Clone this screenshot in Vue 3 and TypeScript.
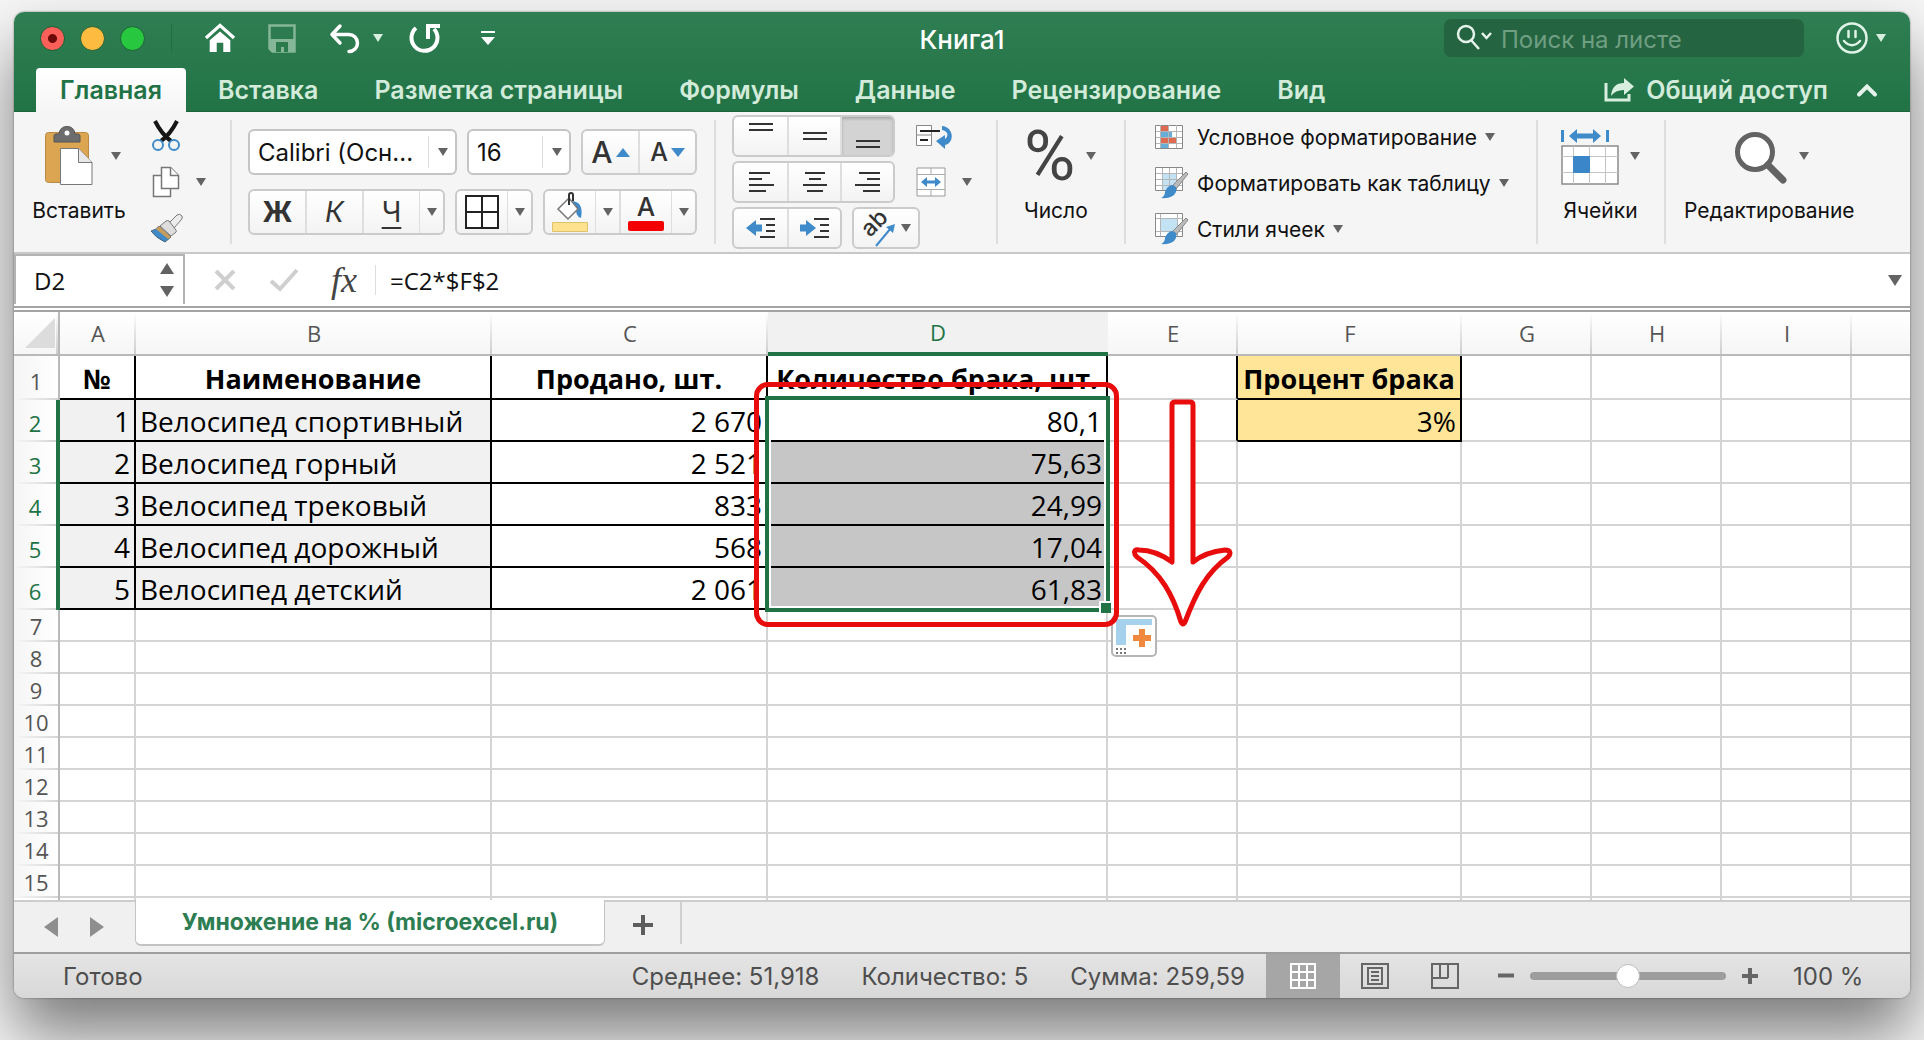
<script setup lang="ts">
import { ref } from 'vue'

const ribbonTabs: string[] = ['Главная', 'Вставка', 'Разметка страницы', 'Формулы', 'Данные', 'Рецензирование', 'Вид']
const activeTab = ref('Главная')
const columns: string[] = ['A', 'B', 'C', 'D', 'E', 'F', 'G', 'H', 'I', '']
const zoomLevel = ref(50)
const formula = ref('=C2*$F$2')
const cellName = ref('D2')

const values: Record<number, string[]> = {
  1: ['№', 'Наименование', 'Продано, шт.', 'Количество брака, шт.', '', 'Процент брака'],
  2: ['1', 'Велосипед спортивный', '2 670', '80,1', '', '3%'],
  3: ['2', 'Велосипед горный', '2 521', '75,63'],
  4: ['3', 'Велосипед трековый', '833', '24,99'],
  5: ['4', 'Велосипед дорожный', '568', '17,04'],
  6: ['5', 'Велосипед детский', '2 061', '61,83'],
}
const rowNumbers: number[] = Array.from({ length: 15 }, (_, i) => i + 1)

function cellText(row: number, col: number): string {
  return values[row]?.[col] ?? ''
}

function cellClass(row: number, col: number) {
  const inTable = row <= 6 && col <= 3
  const inPercent = row <= 2 && col === 5
  return {
    'line-right': inTable || inPercent || (row <= 2 && col === 4),
    'line-bottom': inTable || inPercent,
    head: row === 1,
    name: col === 1 && row > 1,
    muted: col <= 1 && row >= 2 && row <= 6,
    picked: col === 3 && row >= 3 && row <= 6,
    yellow: inPercent,
  }
}
</script>

<template>
  <div class="desk">
    <main class="window">
      <header class="top">
        <div class="titlebar">
          <div class="quick">
            <button class="light red" aria-label="Закрыть"></button>
            <button class="light amber" aria-label="Свернуть"></button>
            <button class="light green" aria-label="Развернуть"></button>
            <span class="quick-sep"></span>
            <button class="plain home" aria-label="Домой">
              <svg width="32" height="30" viewBox="0 0 34 32"><path d="M2 16 17 2.500 32 16" fill="none" stroke="#fff" stroke-width="3.500" /><path d="M6 18.500 17 9l11 9.500V31h-7.500V21h-7v10H6z" fill="#fff" /></svg>
            </button>
            <button class="plain save" aria-label="Сохранить">
              <svg width="28" height="29" viewBox="0 0 28 29"><path d="M1.500 1.500h25v26h-22l-3-3z" fill="none" stroke="#86b698" stroke-width="2.500" /><path d="M2 15h24v12H4l-2-2z" fill="#86b698" /><path d="M8 18h12v10h-4v-5h-3v5H8z" fill="#2b7a4c" /></svg>
            </button>
            <button class="plain undo" aria-label="Отменить">
              <svg width="32" height="31" viewBox="0 0 32 31" fill="none" stroke="#fff" stroke-width="3.500" stroke-linecap="round" stroke-linejoin="round"><path d="M11 3 3 11.500l8 8.500M4 11.500h16a8.500 8.500 0 0 1 0 17" /></svg>
              <i class="tri pale"></i>
            </button>
            <button class="plain redo" aria-label="Повторить">
              <svg width="32" height="32" viewBox="0 0 32 32" fill="none" stroke="#fff" stroke-width="4"><path d="M7 6a13 13 0 1 0 18 1" /><path d="M19 17V4h12" /></svg>
            </button>
            <button class="plain" aria-label="Настроить панель">
              <svg width="16" height="16" viewBox="0 0 16 16"><path d="M1 1h14v2H1zM1 7h14l-7 8z" fill="#fff" /></svg>
            </button>
          </div>
          <h1>Книга1</h1>
          <div class="tools">
            <label class="search">
              <svg width="36" height="30" viewBox="0 0 36 30" fill="none" stroke="#e6f3ea" stroke-width="2.500"><circle cx="10" cy="11" r="8" /><path d="m15 17 8 9M26 10l4.500 5 4.500-5" /></svg>
              <input type="text" placeholder="Поиск на листе" aria-label="Поиск на листе" />
            </label>
            <button class="plain smile" aria-label="Отзыв">
              <svg width="32" height="32" viewBox="0 0 32 32" fill="none" stroke="#dff3e6" stroke-width="2.500"><circle cx="16" cy="16" r="14.500" /><path d="M12.500 9v6M19.500 9v6M8 19q8 8.500 16 0" stroke-linecap="round" /></svg>
              <i class="tri pale"></i>
            </button>
          </div>
        </div>
        <nav class="tabs">
          <button v-for="t in ribbonTabs" :key="t" class="tab" :class="{ active: t === activeTab }" @click="activeTab = t">{{ t }}</button>
          <button class="share">
            <svg width="30" height="24" viewBox="0 0 30 24"><path d="M2 5v17h23v-6" fill="none" stroke="#d8efdf" stroke-width="3" /><path d="M7 18q1-13 13-13V0l10 8.500-10 8.500v-5Q11 12 7 18z" fill="#d8efdf" /></svg>
            <span>Общий доступ</span>
          </button>
          <button class="plain collapse" aria-label="Свернуть ленту">
            <svg width="22" height="14" viewBox="0 0 22 14"><path d="m3 11.500 8-8 8 8" fill="none" stroke="#e6f3ea" stroke-width="4" stroke-linecap="round" /></svg>
          </button>
        </nav>
      </header>

      <section class="ribbon">
        <div class="group g-clip">
          <button class="big paste">
            <span class="pic">
              <svg width="48" height="60" viewBox="0 0 48 60"><rect x=".500" y="6.500" width="43" height="50" rx="3" fill="#dca552" stroke="#b98a45" /><path d="M9 16V10q0-2 2-2h3q1-7.500 8-7.500T30 8h3q2 0 2 2v6z" fill="#6d6d6d" stroke="#555" /><circle cx="22" cy="7" r="2.500" fill="#fff" /><path d="M15.500 22.500h18l13.500 14v22H15.500z" fill="#fff" stroke="#777" /><path d="M33.500 22.500v14H47" fill="#e8e8e8" stroke="#777" /></svg>
              <i class="tri"></i>
            </span>
            <span>Вставить</span>
          </button>
          <div class="clip-col">
            <button class="plain" aria-label="Вырезать">
              <svg width="32" height="32" viewBox="0 0 32 32"><path d="M5 1c4 8 9 15 16 20M27 1c-4 8-9 15-16 20" fill="none" stroke="#161616" stroke-width="4" /><circle cx="8" cy="25" r="5" fill="none" stroke="#3f8ac9" stroke-width="2" /><circle cx="24" cy="25" r="5" fill="none" stroke="#3f8ac9" stroke-width="2" /></svg>
            </button>
            <button class="plain copy" aria-label="Копировать">
              <svg width="32" height="32" viewBox="0 0 32 32" fill="#fff" stroke="#777" stroke-width="1.500"><path d="M3.500 9.500h17v21h-17z" /><path d="M11.500 1.500h9l8 8v13h-17z" /><path d="M20.500 1.500v8h8" /></svg>
              <i class="tri"></i>
            </button>
            <button class="plain" aria-label="Формат по образцу">
              <svg width="34" height="32" viewBox="0 0 34 32"><path d="M18 12 27 3q3-2 5 1 1 2-1 4l-7 8z" fill="#ececec" stroke="#777" /><path d="m10 14 6-5q2-1 3 0l7 9q1 2-1 3l-4 3z" fill="#ddd" stroke="#777" /><path d="M9 14 21 25l-6 5Q6 26 1 19q5-1 8-5z" fill="#3f8ac9" stroke="#46627c" /><path d="M9 14 21 25l-3 2L6 17z" fill="#c89c5b" /></svg>
            </button>
          </div>
        </div>

        <div class="group g-font">
          <div class="line">
            <span class="select wide"><select aria-label="Шрифт"><option>Calibri (Осн...</option></select><i class="tri"></i></span>
            <span class="select size"><select aria-label="Размер шрифта"><option>16</option></select><i class="tri"></i></span>
            <div class="seg grow">
              <button aria-label="Увеличить размер"><span class="glyph-a">A</span><svg width="14" height="9" viewBox="0 0 14 9"><path d="M0 9 7 0l7 9z" fill="#3f8ac9" /></svg></button>
              <button aria-label="Уменьшить размер"><span class="glyph-a small">A</span><svg width="14" height="9" viewBox="0 0 14 9"><path d="m0 0 7 9 7-9z" fill="#3f8ac9" /></svg></button>
            </div>
          </div>
          <div class="line">
            <div class="seg bui">
              <button class="b">Ж</button><button class="i">К</button><button class="u"><u>Ч</u></button><button class="drop" aria-label="Вид подчёркивания"><i class="tri"></i></button>
            </div>
            <div class="seg frame">
              <button aria-label="Границы"><svg width="34" height="34" viewBox="0 0 34 34"><path d="M1 1h32v32H1zM17 1v32M1 17h32" fill="#fff" stroke="#222" stroke-width="2" /></svg></button><button class="drop" aria-label="Вид границ"><i class="tri"></i></button>
            </div>
            <div class="seg paint">
              <button aria-label="Цвет заливки">
                <svg width="38" height="40" viewBox="0 0 38 40"><path d="M21 9q12 1 9 17-5-1-5-9z" fill="#3f8ac9" /><path d="M7 17 18 6l9 11-10 10z" fill="#fff" stroke="#777" stroke-width="1.500" /><path d="M18 13V3q0-2 2-2t2 2v6" fill="none" stroke="#333" stroke-width="2" /><path d="M1.500 30.500h35v9h-35z" fill="#ffe28d" stroke="#e0c26b" /></svg>
              </button><button class="drop" aria-label="Другие заливки"><i class="tri"></i></button>
              <button class="color" aria-label="Цвет текста"><span>A</span><b></b></button><button class="drop" aria-label="Другие цвета"><i class="tri"></i></button>
            </div>
          </div>
        </div>

        <div class="group g-align">
          <div class="line">
            <div class="seg third">
              <button aria-label="По верхнему краю"><svg width="26" height="30" viewBox="0 0 26 30"><path d="M1 3h24M1 9h24" stroke="#333" stroke-width="2" /></svg></button>
              <button aria-label="По середине"><svg width="26" height="30" viewBox="0 0 26 30"><path d="M1 12h24M1 18h24" stroke="#333" stroke-width="2" /></svg></button>
              <button class="on" aria-label="По нижнему краю"><svg width="26" height="30" viewBox="0 0 26 30"><path d="M1 20h24M1 26h24" stroke="#333" stroke-width="2" /></svg></button>
            </div>
            <button class="plain side" aria-label="Перенос текста">
              <svg width="36" height="26" viewBox="0 0 36 26"><path d="M.500 2.500h15v20H.500zM.500 12h15" fill="#fff" stroke="#888" /><path d="M4 8h20M4 17h8" stroke="#222" stroke-width="2" /><path d="M26 3c12 1 13 17 3 19v4l-9-8 9-6v4c4-3 3-8-3-9z" fill="#3f8ac9" /></svg>
            </button>
          </div>
          <div class="line">
            <div class="seg third">
              <button aria-label="По левому краю"><svg width="26" height="24" viewBox="0 0 26 24"><path d="M1 3h21M1 9h13M1 15h25M1 21h17" stroke="#333" stroke-width="2" /></svg></button>
              <button aria-label="По центру"><svg width="26" height="24" viewBox="0 0 26 24"><path d="M3 3h20M7 9h12M1 15h24M5 21h16" stroke="#333" stroke-width="2" /></svg></button>
              <button aria-label="По правому краю"><svg width="26" height="24" viewBox="0 0 26 24"><path d="M4 3h21M12 9h13M0 15h25M8 21h17" stroke="#333" stroke-width="2" /></svg></button>
            </div>
            <button class="plain side merge" aria-label="Объединить ячейки">
              <svg width="30" height="30" viewBox="0 0 30 30"><path d="M1 1h28v28H1z" fill="#fff" stroke="#999" /><path d="M1 7.500h28M1 22.500h28M15 1v6.500M15 22.500V29" stroke="#aaa" fill="none" /><path d="m5 15 6-5v3.500h8V10l6 5-6 5v-3.500h-8V20z" fill="#3f8ac9" /></svg>
              <i class="tri"></i>
            </button>
          </div>
          <div class="line">
            <div class="seg third">
              <button aria-label="Уменьшить отступ"><svg width="30" height="24" viewBox="0 0 30 24"><path d="m0 12 10-8v4.500h6v7h-6V20z" fill="#3f8ac9" /><path d="M14 3h15M20 9h9M20 15h9M14 21h15" stroke="#333" stroke-width="2" /></svg></button>
              <button aria-label="Увеличить отступ"><svg width="30" height="24" viewBox="0 0 30 24"><path d="M16 12 6 4v4.500H0v7h6V20z" fill="#3f8ac9" /><path d="M14 3h15M20 9h9M20 15h9M14 21h15" stroke="#333" stroke-width="2" /></svg></button>
            </div>
            <div class="seg orient">
              <button aria-label="Ориентация">
                <svg width="34" height="34" viewBox="0 0 34 34"><text x="0" y="0" transform="translate(8 27) rotate(-45)" font-family="Inter, sans-serif" font-size="23" font-weight="500" fill="#333">ab</text><path d="m14 35 15-18" stroke="#3f8ac9" stroke-width="2" /><path d="m33 13-2 9-7-6z" fill="#3f8ac9" /></svg>
                <i class="tri"></i>
              </button>
            </div>
          </div>
        </div>

        <div class="group g-number">
          <button class="big">
            <span class="pic"><span class="percent">%</span><i class="tri"></i></span>
            <span>Число</span>
          </button>
        </div>

        <div class="group g-style">
          <button class="row-btn">
            <svg width="32" height="32" viewBox="0 0 32 32"><path d="M.500 4.500h27v23H.500z" fill="#fff" stroke="#888" /><path d="M5 5h8v5H5zM5 16h17v6H5z" fill="#dd6b52" /><path d="M5 10h12v6H5zM5 22h8v5H5z" fill="#66aed8" /><path d="M5.500 4v23M13.500 4v23M21.500 4v23M1 10.500h26M1 16.500h26M1 22.500h26" stroke="#b5b5b5" fill="none" /></svg>
            <span>Условное форматирование</span><i class="tri"></i>
          </button>
          <button class="row-btn">
            <svg width="32" height="32" viewBox="0 0 32 32"><path d="M.500.500h27v23H.500z" fill="#fff" stroke="#888" /><path d="M7 6h14v17H7z" fill="#c3e3f4" /><path d="M7.500 1v22M14.500 1v22M21.500 1v22M1 6.500h26M1 12.500h26M1 18.500h26" stroke="#b5b5b5" fill="none" /><path d="m31 5 2 2-12 15-4-3z" fill="#bbb" stroke="#888" /><path d="M17 18q6 1 4 7-3 7-15 6 4-2 4-6 2-6 7-7z" fill="#3f8ac9" /></svg>
            <span>Форматировать как таблицу</span><i class="tri"></i>
          </button>
          <button class="row-btn">
            <svg width="32" height="32" viewBox="0 0 32 32"><path d="M.500.500h27v23H.500z" fill="#fff" stroke="#888" /><path d="M5 6h18v13H5z" fill="#c3e3f4" /><path d="M5.500 1v22M22.500 1v22M1 5.500h26M1 18.500h26" stroke="#b5b5b5" fill="none" /><path d="m31 5 2 2-12 15-4-3z" fill="#bbb" stroke="#888" /><path d="M17 18q6 1 4 7-3 7-15 6 4-2 4-6 2-6 7-7z" fill="#3f8ac9" /></svg>
            <span>Стили ячеек</span><i class="tri"></i>
          </button>
        </div>

        <div class="group g-cells">
          <button class="big">
            <span class="pic">
              <svg width="58" height="60" viewBox="0 0 58 60"><path d="M1.500 4v12M46.500 4v12" stroke="#3f8ac9" stroke-width="3" /><path d="m8 10 8-7v4.500h16V3l8 7-8 7v-4.500H16V17z" fill="#3f8ac9" /><path d="M1 20h56v38H1z" fill="#fff" stroke="#8a8a8a" stroke-width="1.500" /><path d="M12.500 20v38M28.500 20v38M44.500 20v38M1 30.500h56M1 46.500h56" stroke="#c4c4c4" /><rect x="12" y="30" width="17" height="17" rx="1" fill="#3b86c8" /></svg>
              <i class="tri"></i>
            </span>
            <span>Ячейки</span>
          </button>
        </div>

        <div class="group g-edit">
          <button class="big">
            <span class="pic">
              <svg width="54" height="60" viewBox="0 0 54 60"><circle cx="21" cy="26" r="17.500" fill="#fff" stroke="#636363" stroke-width="5" /><path d="m34 39 15 15" stroke="#636363" stroke-width="7" stroke-linecap="round" /></svg>
              <i class="tri"></i>
            </span>
            <span>Редактирование</span>
          </button>
        </div>
      </section>

      <section class="formula-bar">
        <div class="name-box">
          <input v-model="cellName" type="text" aria-label="Имя ячейки" />
          <span class="spin"><i class="tri-up"></i><i class="tri-down"></i></span>
        </div>
        <button class="plain fb-x" aria-label="Отмена"><svg width="24" height="24" viewBox="0 0 24 24"><path d="m3 3 18 18M21 3 3 21" stroke="#cfcfcf" stroke-width="4" /></svg></button>
        <button class="plain fb-v" aria-label="Ввод"><svg width="30" height="24" viewBox="0 0 30 24"><path d="m2 13 9 8L28 2" fill="none" stroke="#cfcfcf" stroke-width="4" /></svg></button>
        <button class="plain fx" aria-label="Вставить функцию">fx</button>
        <input v-model="formula" class="formula" type="text" aria-label="Строка формул" />
        <button class="plain expand" aria-label="Развернуть строку формул"><i class="tri-down"></i></button>
      </section>

      <section class="sheet">
        <table>
          <colgroup>
            <col class="c-num" /><col class="c-a" /><col class="c-b" /><col class="c-c" /><col class="c-d" /><col class="c-e" /><col class="c-f" /><col class="c-g" /><col class="c-g" /><col class="c-g" /><col />
          </colgroup>
          <thead>
            <tr>
              <th class="corner"><svg width="32" height="32" viewBox="0 0 32 32"><path d="M31 1v30H1z" fill="#dcdcdc" /></svg></th>
              <th v-for="c in columns" :key="c" scope="col" :class="{ sel: c === 'D' }">{{ c }}</th>
            </tr>
          </thead>
          <tbody>
            <tr v-for="r in rowNumbers" :key="r" :class="{ first: r === 1, tall: r >= 2 && r <= 6 }">
              <th scope="row" :class="{ sel: r >= 2 && r <= 6 }">{{ r }}</th>
              <td v-for="(c, i) in columns" :key="c" :class="cellClass(r, i)">{{ cellText(r, i) }}</td>
            </tr>
            <tr class="rest"><th></th><td v-for="c in columns" :key="c"></td></tr>
          </tbody>
        </table>
        <div class="selection"><span class="handle"></span></div>
        <button class="fill-options" aria-label="Параметры автозаполнения">
          <svg width="40" height="36" viewBox="0 0 40 36"><path d="M2 1h36v6H12v20H2z" fill="#a5d1ec" /><path d="M25 11h6v6h6v6h-6v6h-6v-6h-6v-6h6z" fill="#f0883d" /><path d="M2 30h2v2H2zM6 30h2v2H6zM10 30h2v2h-2zM2 34h2v2H2zM6 34h2v2H6zM10 34h2v2h-2z" fill="#777" /></svg>
        </button>
        <div class="mark-box"></div>
        <svg class="mark-arrow" width="104" height="232" viewBox="0 0 104 232"><path d="M45 6h15q3 0 3 3v157c10-8 22-11 32-12 6 0 6 4 3 7-22 16-32 36-43 65q-2 4-4 0C43 199 31 177 7 161c-4-4-3-8 2-7 11 0 22 4 33 12V9q0-3 3-3z" fill="#fff" stroke="#e80c0c" stroke-width="5" stroke-linejoin="round" /></svg>
      </section>

      <section class="sheet-tabs">
        <button class="plain prev" aria-label="Предыдущий лист"><svg width="14" height="20" viewBox="0 0 14 20"><path d="M14 0v20L0 10z" fill="#8e8e8e" /></svg></button>
        <button class="plain next" aria-label="Следующий лист"><svg width="14" height="20" viewBox="0 0 14 20"><path d="M0 0v20l14-10z" fill="#8e8e8e" /></svg></button>
        <button class="sheet-tab">Умножение на % (microexcel.ru)</button>
        <button class="add" aria-label="Новый лист"><svg width="20" height="20" viewBox="0 0 20 20"><path d="M10 0v20M0 10h20" stroke="#5d5d5d" stroke-width="4" /></svg></button>
      </section>

      <footer class="status">
        <span class="ready">Готово</span>
        <div class="stats"><span>Среднее: 51,918</span><span>Количество: 5</span><span>Сумма: 259,59</span></div>
        <div class="views">
          <button class="on" aria-label="Обычный"><svg width="26" height="26" viewBox="0 0 26 26"><path d="M1 1h24v24H1zM9 1v24M17 1v24M1 9h24M1 17h24" fill="none" stroke="#fff" stroke-width="2" /></svg></button>
          <button aria-label="Разметка страницы"><svg width="28" height="26" viewBox="0 0 28 26" fill="none" stroke="#666" stroke-width="2"><path d="M1 1h26v24H1zM7 5h14v16H7zM10 9h8M10 13h8M10 17h8" /></svg></button>
          <button aria-label="Страничный режим"><svg width="28" height="26" viewBox="0 0 28 26" fill="none" stroke="#666" stroke-width="2"><path d="M1 1h26v24H1zM9 1v14M17 1v14M1 15h16" /></svg></button>
        </div>
        <button class="plain" aria-label="Уменьшить масштаб"><svg width="16" height="16" viewBox="0 0 16 16"><path d="M0 7.500h16" stroke="#666" stroke-width="4" /></svg></button>
        <input v-model="zoomLevel" type="range" min="0" max="100" aria-label="Масштаб" />
        <button class="plain" aria-label="Увеличить масштаб"><svg width="16" height="16" viewBox="0 0 16 16"><path d="M8 0v16M0 8h16" stroke="#666" stroke-width="4" /></svg></button>
        <span class="zoom">100 %</span>
      </footer>
    </main>
  </div>
</template>

<style>
body {
  background: #f6f6f6;
}
</style>

<style scoped>
* {
  box-sizing: border-box;
}
.desk {
  min-height: 100vh;
  padding: 12px 14px 42px;
  overflow: hidden;
  font-family: Inter, "Liberation Sans", sans-serif;
  font-size: 21px;
  color: #111;
}
.window {
  border-radius: 10px;
  overflow: hidden;
  background: #fff;
  box-shadow: 0 0 2px rgba(0, 0, 0, 0.5), 0 36px 64px rgba(0, 0, 0, 0.5);
}
button {
  display: flex;
  align-items: center;
  justify-content: center;
  border: 0;
  padding: 0;
  background: none;
  color: inherit;
  font: inherit;
}
input,
select {
  border: 0;
  padding: 0;
  background: none;
  color: inherit;
  font: inherit;
  outline: none;
}
svg {
  display: block;
  flex: none;
  overflow: visible;
}
.tri {
  flex: none;
  border: 5px solid transparent;
  border-top: 8px solid #636363;
  border-bottom: 0;
}
.tri.pale {
  border-top-color: #d8efdf;
}
.tri-down,
.tri-up {
  border: 7px solid transparent;
}
.tri-down {
  border-top: 11px solid #636363;
  border-bottom: 0;
}
.tri-up {
  border-bottom: 11px solid #636363;
  border-top: 0;
}

/* title bar */
.top {
  background: linear-gradient(#307e53, #217346);
  border-bottom: 1px solid #1c633c;
}
.titlebar {
  display: grid;
  grid-template-columns: 1fr auto 1fr;
  align-items: center;
  height: 56px;
  padding-bottom: 4px;
}
h1 {
  margin: 0;
  padding-top: 2px;
  font-size: 26px;
  font-weight: 500;
  color: #fff;
}
.quick {
  display: flex;
  align-items: center;
  padding-left: 26px;
}
.light {
  width: 25px;
  height: 25px;
  margin-right: 15px;
  border-radius: 50%;
  border: 1px solid #1f6038;
}
.red {
  background: radial-gradient(circle, #6b0a08 4px, #fc6058 5px);
}
.amber {
  background: #fdbc40;
}
.green {
  background: #27c840;
}
.quick-sep {
  width: 1px;
  height: 28px;
  margin: 0 32px 0 11px;
  background: #266c43;
}
.home {
  margin-right: 32px;
}
.save {
  margin-right: 33px;
}
.undo {
  gap: 12px;
  margin-right: 26px;
}
.redo {
  margin-right: 39px;
}
.tools {
  display: flex;
  align-items: center;
  justify-content: flex-end;
  gap: 32px;
  padding-right: 24px;
}
.search {
  display: flex;
  align-items: center;
  gap: 9px;
  width: 360px;
  height: 38px;
  padding-left: 12px;
  border-radius: 7px;
  background: #256440;
}
.search input {
  flex: 1;
  min-width: 0;
  padding-top: 2px;
  font-size: 24px;
}
.search input::placeholder {
  color: #6f9f83;
  opacity: 1;
}
.smile {
  gap: 8px;
}
.tabs {
  display: flex;
  align-items: stretch;
  gap: 8px;
  height: 43px;
  padding: 0 32px 0 22px;
  font-size: 25px;
  font-weight: 600;
}
.tab {
  padding: 0 24px;
  color: #d3ebda;
}
.tab.active {
  border-radius: 4px 4px 0 0;
  margin-bottom: -1px;
  background: linear-gradient(#fff, #f5f5f5);
  color: #217346;
}
.share {
  gap: 12px;
  margin-left: auto;
  color: #d3ebda;
}
.collapse {
  margin-left: 20px;
}

/* ribbon */
.ribbon {
  display: flex;
  height: 142px;
  border-bottom: 2px solid #c8c8c8;
  background: #f5f5f5;
}
.group {
  position: relative;
  flex: none;
}
.group + .group::before {
  content: "";
  position: absolute;
  left: 0;
  top: 8px;
  bottom: 8px;
  width: 2px;
  background: #dedede;
}
.line {
  display: flex;
  gap: 10px;
}
.big {
  flex-direction: column;
  align-items: center;
  padding-top: 14px;
  line-height: 28px;
}
.pic {
  display: flex;
  align-items: center;
  height: 60px;
  gap: 11px;
  margin-bottom: 11px;
}
.g-clip {
  display: flex;
  align-items: flex-start;
  width: 216px;
  padding-left: 18px;
}
.paste {
  width: 94px;
}
.paste .pic {
  gap: 18px;
  margin-left: 8px;
}
.clip-col {
  display: flex;
  flex-direction: column;
  align-items: flex-start;
  gap: 14px;
  padding: 8px 0 0 24px;
}
.copy {
  gap: 14px;
}
.g-font {
  display: flex;
  flex-direction: column;
  gap: 14px;
  width: 484px;
  padding: 17px 0 0 18px;
}
.g-font .line {
  width: 450px;
}
.select {
  display: flex;
  align-items: center;
  height: 46px;
  padding-right: 7px;
  border: 2px solid #c4c4c4;
  border-radius: 6px;
  background: #fff;
  font-size: 24px;
}
.select select {
  flex: 1;
  min-width: 0;
  height: 32px;
  margin-right: 9px;
  padding-left: 8px;
  border-right: 1px solid #ddd;
  appearance: none;
}
.wide {
  width: 209px;
}
.size {
  width: 104px;
}
.seg {
  display: flex;
  height: 46px;
  border: 2px solid #cbcbcb;
  border-radius: 6px;
  background: linear-gradient(#fff, #f3f3f3);
  overflow: hidden;
}
.seg button {
  flex: 1 1 0;
  color: #333;
}
.seg button + button {
  border-left: 2px solid #dedede;
}
.seg .drop {
  flex: 0 0 24px;
}
.seg button.drop {
  border-left: 1px solid #dedede;
}
.seg .on {
  background: #d3d3d3;
  box-shadow: inset 0 2px 3px #aaa;
}
.grow {
  width: 116px;
}
.grow button {
  gap: 3px;
}
.glyph-a {
  font-size: 30px;
  font-weight: 500;
}
.glyph-a.small {
  font-size: 25px;
}
.bui {
  width: 197px;
  font-size: 28px;
}
.b {
  font-weight: 700;
}
.i {
  font-style: italic;
}
.u u {
  text-decoration-thickness: 2px;
  text-underline-offset: 5px;
}
.frame {
  width: 78px;
}
.paint {
  width: 154px;
}
.color {
  flex-direction: column;
  font-size: 26px;
  font-weight: 500;
  line-height: 28px;
}
.color b {
  width: 36px;
  height: 10px;
  border-radius: 2px;
  background: #f50000;
}
.g-align {
  display: flex;
  flex-direction: column;
  gap: 4px;
  width: 282px;
  padding: 3px 0 0 18px;
}
.g-align .seg {
  height: 42px;
}
.third button {
  flex: 0 0 53px;
}
.side {
  margin-left: 11px;
}
.merge {
  gap: 16px;
}
.orient {
  width: 68px;
  overflow: visible;
}
.orient button {
  gap: 5px;
}
.g-number {
  width: 128px;
  padding-left: 28px;
}
.g-number .big {
  align-items: flex-start;
}
.percent {
  font-family: Roboto, sans-serif;
  font-size: 70px;
  line-height: 60px;
  color: #444;
}
.g-style {
  width: 412px;
  padding: 2px 0 0 31px;
}
.row-btn {
  gap: 8px;
  height: 46px;
}
.row-btn svg {
  margin-right: 2px;
}
.g-cells {
  width: 128px;
  padding-left: 25px;
}
.g-edit {
  flex: 1 0 auto;
  padding-left: 20px;
}
.g-edit .pic {
  margin-left: 4px;
}

/* formula bar */
.formula-bar {
  display: flex;
  align-items: center;
  height: 58px;
  border-bottom: 6px double #a3a3a3;
  background: #fff;
  font-family: "Open Sans", sans-serif;
  font-size: 24px;
  color: #111;
}
.name-box {
  display: flex;
  align-items: center;
  align-self: stretch;
  width: 171px;
  margin-bottom: 2px;
  padding: 0 9px 0 18px;
  border: 2px solid #b3b3b3;
  border-bottom: 0;
}
.name-box input {
  flex: 1;
  min-width: 0;
}
.spin {
  display: flex;
  flex-direction: column;
  gap: 12px;
}
.fb-x {
  margin-left: 28px;
}
.fb-v {
  margin-left: 32px;
}
.fx {
  width: 77px;
  height: 30px;
  border-right: 1px solid #ddd;
  padding-left: 14px;
  font-family: "Liberation Serif", serif;
  font-size: 36px;
  font-style: italic;
  color: #444;
}
.formula {
  flex: 1;
  min-width: 0;
  padding-left: 14px;
}
.expand {
  margin-right: 8px;
}

/* grid */
.sheet {
  position: relative;
  font-family: "Open Sans", sans-serif;
}
table {
  width: 100%;
  table-layout: fixed;
  border-collapse: separate;
  border-spacing: 0;
}
.c-num { width: 46px; }
.c-a { width: 76px; }
.c-b { width: 356px; }
.c-c { width: 276px; }
.c-d { width: 340px; }
.c-e,
.c-g { width: 130px; }
.c-f { width: 224px; }
th,
td {
  padding: 0;
  white-space: nowrap;
}
thead th {
  height: 44px;
  border-bottom: 2px solid #b9b9b9;
  background: linear-gradient(transparent, #cfcfcf) right / 2px 100% no-repeat, linear-gradient(#fff, #f6f6f6);
  font-size: 22px;
  font-weight: 400;
  color: #555;
}
thead th:last-child {
  background: linear-gradient(#fff, #f6f6f6);
}
thead th.sel {
  border-bottom: 4px solid #217346;
  background: #f1f1f1;
  color: #217346;
}
.corner {
  border-right: 2px solid #b9b9b9;
}
.corner svg {
  margin-left: 10px;
}
tbody th {
  height: 32px;
  border-right: 2px solid #b9b9b9;
  background: linear-gradient(90deg, transparent, #d4d4d4) bottom / 100% 2px no-repeat, linear-gradient(90deg, #f5f5f5, #fff);
  font-size: 22px;
  line-height: 28px;
  font-weight: 400;
  color: #555;
}
tbody th.sel {
  border-right: 4px solid #217346;
  color: #217346;
}
td {
  border-right: 2px solid #d4d4d4;
  border-bottom: 2px solid #d4d4d4;
  padding: 0 4px;
  text-align: right;
  font-size: 28px;
  line-height: 28px;
  color: #000;
}
td:last-child {
  border-right: 0;
}
.first th {
  height: 44px;
  padding-top: 6px;
}
.tall th {
  height: 42px;
  padding-top: 4px;
}
.tall td {
  padding-top: 2px;
}
.line-right {
  border-right-color: #000;
}
.line-bottom {
  border-bottom-color: #000;
}
.head {
  padding: 4px 0 0;
  text-align: center;
  font-weight: 700;
  font-size: 27px;
}
.name {
  text-align: left;
}
.muted {
  background: #f1f1f1;
}
.picked {
  background: #c6c6c6;
}
.yellow {
  background: #ffe598;
}
.rest th,
.rest td {
  height: 2px;
  border-bottom: 0;
  background: #fff;
  line-height: 0;
}
.selection {
  position: absolute;
  left: 751px;
  top: 84px;
  width: 345px;
  height: 216px;
  border: 4px solid #217346;
  box-shadow: inset 0 0 0 2px #fff;
}
.handle {
  position: absolute;
  right: -5px;
  bottom: -5px;
  width: 12px;
  height: 12px;
  border: solid #fff;
  border-width: 2px 0 0 2px;
  background: #217346;
}
.fill-options {
  position: absolute;
  left: 1097px;
  top: 303px;
  width: 46px;
  height: 42px;
  border: 2px solid #b5b5b5;
  border-radius: 5px;
  background: #fff;
}
.mark-box {
  position: absolute;
  left: 740px;
  top: 70px;
  width: 365px;
  height: 245px;
  border: 5px solid #e80c0c;
  border-radius: 14px;
}
.mark-arrow {
  position: absolute;
  left: 1116px;
  top: 84px;
}

/* sheet tabs */
.sheet-tabs {
  display: flex;
  align-items: center;
  height: 52px;
  border-top: 2px solid #cdcdcd;
  background: #f0f0f0;
}
.prev {
  margin-left: 30px;
}
.next {
  margin: 0 31px 0 32px;
}
.sheet-tab {
  align-self: flex-start;
  width: 470px;
  height: 46px;
  margin-top: -2px;
  border: solid #c4c4c4;
  border-width: 0 1px 2px;
  border-radius: 0 0 6px 6px;
  background: #fff;
  font-size: 23px;
  font-weight: 700;
  color: #2d7d52;
}
.add {
  align-self: flex-start;
  width: 77px;
  height: 42px;
  padding-top: 4px;
  border-right: 2px solid #cfcfcf;
}

/* status bar */
.status {
  display: flex;
  align-items: center;
  height: 46px;
  border-top: 2px solid #9e9e9e;
  padding: 0 49px;
  background: linear-gradient(#e4e4e4, #d8d8d8);
  font-size: 24px;
  color: #4e4e4e;
}
.stats {
  display: flex;
  gap: 42px;
  margin-left: auto;
}
.views {
  display: flex;
  align-self: stretch;
  margin: 0 18px 0 21px;
}
.views button {
  width: 70px;
}
.views .on {
  width: 74px;
  background: #a6a6a6;
}
input[type="range"] {
  width: 196px;
  height: 24px;
  margin: 0 16px;
  appearance: none;
}
input[type="range"]::-webkit-slider-runnable-track {
  height: 8px;
  border-radius: 4px;
  background: #9d9d9d;
}
input[type="range"]::-webkit-slider-thumb {
  appearance: none;
  width: 24px;
  height: 24px;
  margin-top: -8px;
  border: 1px solid #bbb;
  border-radius: 50%;
  background: #fff;
}
.zoom {
  width: 68px;
  margin-left: 35px;
  white-space: nowrap;
}
</style>
